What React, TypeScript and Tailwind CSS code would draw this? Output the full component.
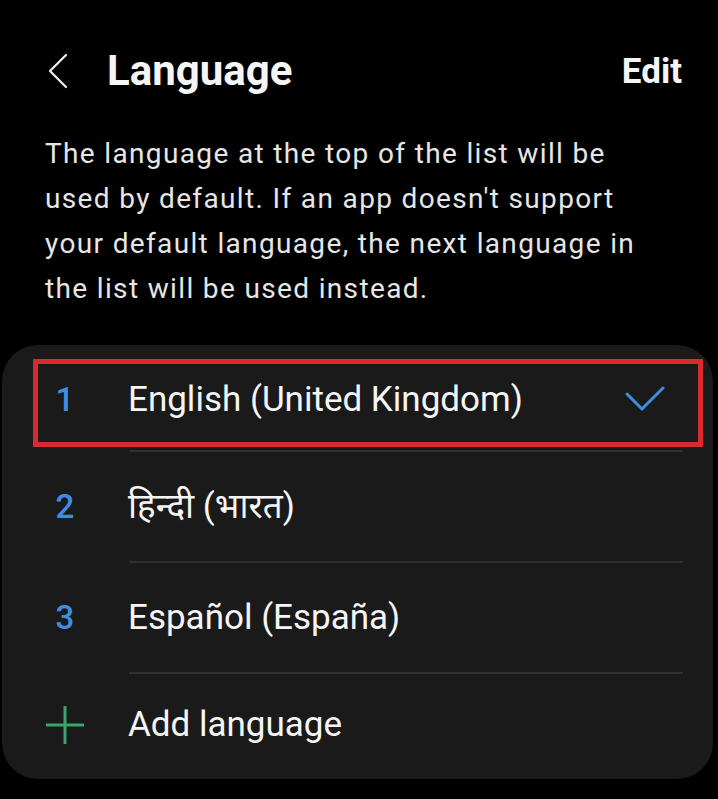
import React from 'react';

const languages = [
  { num: '1', name: 'English (United Kingdom)', selected: true },
  { num: '2', name: 'हिन्दी (भारत)' },
  { num: '3', name: 'Español (España)' },
];

function BackIcon() {
  return (
    <svg width="22" height="36" viewBox="0 0 22 36" fill="none">
      <path d="M19 2L3 18L19 34" stroke="#f2f2f2" strokeWidth="2.2" strokeLinecap="round" strokeLinejoin="round" />
    </svg>
  );
}

function Check() {
  return (
    <svg width="40" height="26" viewBox="0 0 40 26" fill="none">
      <path d="M2 8L17 23L38 2" stroke="#3f8ee6" strokeWidth="3" strokeLinecap="round" strokeLinejoin="round" />
    </svg>
  );
}

function Plus() {
  return (
    <svg width="38" height="38" viewBox="0 0 38 38" fill="none">
      <path d="M19 1V37M1 19H37" stroke="#3aa56b" strokeWidth="3" strokeLinecap="round" />
    </svg>
  );
}

function Divider() {
  return <div className="ml-[127px] mr-[30px] h-[2px] bg-[#2f2f2f]" />;
}

export default function App() {
  return (
    <div className="h-[799px] w-[718px] overflow-hidden bg-black font-['Roboto','Noto_Sans',sans-serif] text-[#f5f5f5]">
      <header className="mt-[31px] flex h-[80px] items-center pl-[47px] pr-[36px]">
        <BackIcon />
        <h1 className="ml-[38px] text-[42px] font-bold leading-none">Language</h1>
        <button className="ml-auto text-[35px] font-bold leading-none">Edit</button>
      </header>

      <p className="mt-[20px] px-[45px] text-[28px] leading-[45px] tracking-[1.35px] text-[#e6e6e6]">
        The language at the top of the list will be
        <br />
        used by default. If an app doesn't support
        <br />
        your default language, the next language in
        <br />
        the list will be used instead.
      </p>

      <div className="relative ml-[2px] mt-[34px] w-[711px] rounded-[36px] bg-[#1a1a1a]">
        {languages.map((lang, i) => (
          <React.Fragment key={lang.num}>
            {i > 0 && <Divider />}
            <div className={`relative flex items-center ${i === 0 ? 'h-[105px] pt-[4px]' : 'h-[109px]'}`}>
              <span className="w-[126px] text-center text-[33px] font-medium text-[#3f8ee6]">{lang.num}</span>
              <span className="text-[35px] leading-none">{lang.name}</span>
              {lang.selected && (
                <span className="ml-auto mr-[48px] mt-[-2px]">
                  <Check />
                </span>
              )}
              {lang.selected && (
                <div className="absolute left-[31px] top-[14px] h-[88px] w-[670px] border-[5px] border-[#d92a30]" />
              )}
            </div>
          </React.Fragment>
        ))}
        <Divider />
        <div className="flex h-[105px] items-center pb-[4px]">
          <span className="flex w-[126px] justify-center">
            <Plus />
          </span>
          <span className="text-[35px] leading-none">Add language</span>
        </div>
      </div>
    </div>
  );
}
